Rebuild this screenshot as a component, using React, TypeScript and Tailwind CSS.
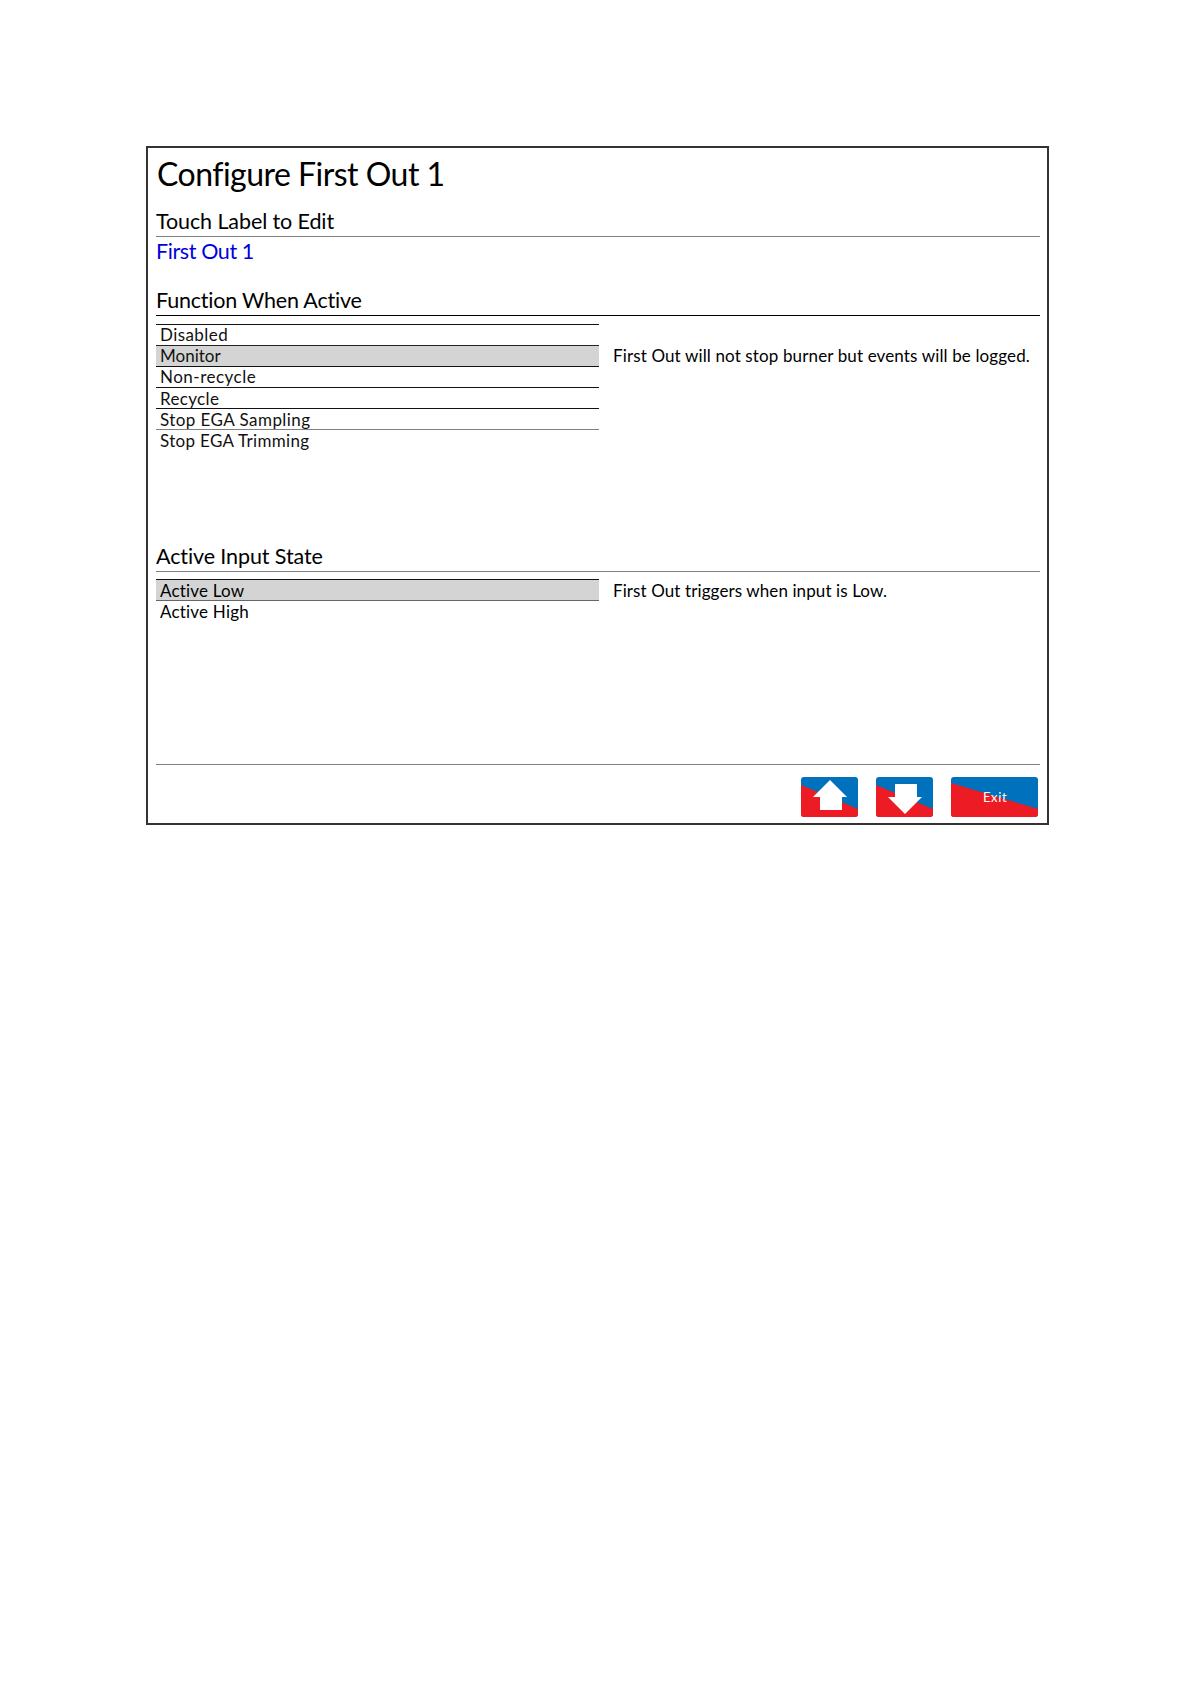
const font = "font-['Lato','Liberation_Sans',sans-serif]";

function Row({ label, selected, lineClass, spacing }: { label: string; selected?: boolean; lineClass: string; spacing: string }) {
  return (
    <div className={`h-[21px] pl-[4px] text-[17px] leading-[20px] text-[#111] border-t ${lineClass} ${spacing} ${selected ? "bg-[#d4d4d4]" : ""}`}>
      {label}
    </div>
  );
}

function ArrowButton({ dir }: { dir: "up" | "down" }) {
  return (
    <svg width="57" height="40" viewBox="0 0 57 40" className="rounded-[3px] shrink-0">
      <rect width="57" height="40" fill="#0071bc" />
      <polygon points="0,8 57,32 57,40 0,40" fill="#ed1c24" />
      {dir === "up" ? (
        <polygon points="29,3 46,20 41,20 41,33 19,33 19,20 12,20" fill="#fff" />
      ) : (
        <polygon points="19,7 41,7 41,20 46,20 29,37 12,20 19,20" fill="#fff" />
      )}
    </svg>
  );
}

function ExitButton() {
  return (
    <div className="relative w-[87px] h-[40px] shrink-0">
      <svg width="87" height="40" viewBox="0 0 87 40" className="rounded-[3px]">
        <rect width="87" height="40" fill="#0071bc" />
        <polygon points="0,6 87,32 87,40 0,40" fill="#ed1c24" />
      </svg>
      <span className="absolute left-[32px] top-[12px] text-[13px] leading-[16px] tracking-[0.6px] text-white">Exit</span>
    </div>
  );
}

export default function App() {
  return (
    <div className={`${font} min-h-[1684px] bg-white pt-[146px] pl-[146px]`}>
      <div className="w-[903px] h-[679px] border-2 border-[#333] pl-[8px] pr-[7px] text-black flex flex-col">
        <div className="h-[48px] pl-[1px] pt-[4px] text-[32px] leading-[44px] tracking-[-0.52px]">Configure First Out 1</div>
        <div className="h-[41px] flex items-end border-b border-[#808080] text-[21.5px] leading-[28px] pb-[1px] tracking-[-0.1px]">Touch Label to Edit</div>
        <div className="h-[29px] pt-[1px] text-[21.5px] leading-[27px] text-[#0000dd] tracking-[-0.4px]">First Out 1</div>
        <div className="h-[50px] flex items-end border-b border-black pb-[1px] text-[21.5px] leading-[28px] tracking-[-0.2px]">Function When Active</div>
        <div className="h-[232px] pt-[8px] flex">
          <div className="w-[443px] shrink-0">
            <Row label="Disabled" lineClass="border-[#111]" spacing="tracking-[0.43px]" />
            <Row label="Monitor" selected lineClass="border-[#222]" spacing="tracking-[0px]" />
            <Row label="Non-recycle" lineClass="border-[#111]" spacing="tracking-[0.5px]" />
            <Row label="Recycle" lineClass="border-[#111] pt-[1px]" spacing="tracking-[0.35px]" />
            <Row label="Stop EGA Sampling" lineClass="border-[#111] pt-[1px]" spacing="tracking-[0.44px]" />
            <Row label="Stop EGA Trimming" lineClass="border-[#808080] pt-[1px]" spacing="tracking-[0.33px]" />
          </div>
          <div className="ml-[14px] pt-[22px] text-[17px] leading-[20px] tracking-[0.13px] whitespace-nowrap">First Out will not stop burner but events will be logged.</div>
        </div>
        <div className="h-[24px] flex items-end border-b border-[#808080] pb-[1px] text-[21.5px] leading-[28px] tracking-[-0.1px]">Active Input State</div>
        <div className="h-[193px] pt-[7px] flex border-b border-[#808080]">
          <div className="w-[443px] shrink-0">
            <div className="h-[22px] pl-[4px] pt-[1px] text-[17px] leading-[20px] tracking-[0.18px] bg-[#d4d4d4] border-y border-t-[#111] border-b-[#666]">Active Low</div>
            <div className="h-[21px] pl-[4px] pt-[1px] text-[17px] leading-[20px] tracking-[0.2px]">Active High</div>
          </div>
          <div className="ml-[14px] pt-[1px] text-[17px] leading-[22px] tracking-[0.1px] whitespace-nowrap">First Out triggers when input is Low.</div>
        </div>
        <div className="flex justify-end gap-[18px] pt-[12px] pr-[2px]">
          <ArrowButton dir="up" />
          <ArrowButton dir="down" />
          <ExitButton />
        </div>
      </div>
    </div>
  );
}
